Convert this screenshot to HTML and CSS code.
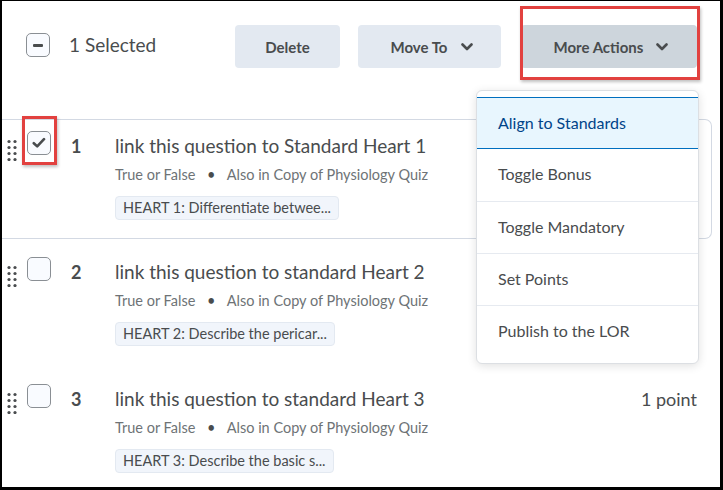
FILE: index.html
```html
<!DOCTYPE html>
<html lang="en">
<head>
  <meta charset="UTF-8">
  <title>Question list - More Actions</title>
  <link rel="stylesheet" href="styles.css">
</head>
<body>
  <div class="frame">
    <header class="toolbar">
      <div class="selection">
        <span class="checkbox partial"><span class="dash"></span></span>
        <span class="selected-count">1 Selected</span>
      </div>
      <div class="actions">
        <button class="btn">Delete</button>
        <button class="btn">Move To
          <svg class="chevron" width="12" height="8" viewBox="0 0 12 8"><path d="M1.5 1.5 L6 6 L10.5 1.5" /></svg>
        </button>
        <div class="menu-wrap">
          <button class="btn active">More Actions
            <svg class="chevron" width="12" height="8" viewBox="0 0 12 8"><path d="M1.5 1.5 L6 6 L10.5 1.5" /></svg>
          </button>
          <span class="callout callout-btn"></span>
          <ul class="dropdown">
            <li class="item focused">Align to Standards</li>
            <li class="item">Toggle Bonus</li>
            <li class="item">Toggle Mandatory</li>
            <li class="item">Set Points</li>
            <li class="item">Publish to the LOR</li>
          </ul>
        </div>
      </div>
    </header>

    <div class="questions">
      <div class="row selected">
        <svg class="handle" width="10" height="22" viewBox="0 0 10 22"><g fill="#494c4e"><circle cx="2" cy="2.5" r="1.6"/><circle cx="8" cy="2.5" r="1.6"/><circle cx="2" cy="8.5" r="1.6"/><circle cx="8" cy="8.5" r="1.6"/><circle cx="2" cy="14.5" r="1.6"/><circle cx="8" cy="14.5" r="1.6"/><circle cx="2" cy="20.5" r="1.6"/><circle cx="8" cy="20.5" r="1.6"/></g></svg>
        <div class="check-cell">
          <span class="checkbox checked">
            <svg width="14" height="12" viewBox="0 0 14 12"><path d="M1.8 6.2 L5.2 9.4 L12 2.2" fill="none" stroke="#494c4e" stroke-width="2.6" stroke-linecap="round" stroke-linejoin="round"/></svg>
          </span>
          <span class="callout callout-check"></span>
        </div>
        <div class="num">1</div>
        <div class="body">
          <div class="title">link this question to Standard Heart 1</div>
          <div class="meta">True or False <span class="dot">&bull;</span> Also in Copy of Physiology Quiz</div>
          <span class="tag">HEART 1: Differentiate betwee...</span>
        </div>
      </div>

      <div class="row">
        <svg class="handle" width="10" height="22" viewBox="0 0 10 22"><g fill="#494c4e"><circle cx="2" cy="2.5" r="1.6"/><circle cx="8" cy="2.5" r="1.6"/><circle cx="2" cy="8.5" r="1.6"/><circle cx="8" cy="8.5" r="1.6"/><circle cx="2" cy="14.5" r="1.6"/><circle cx="8" cy="14.5" r="1.6"/><circle cx="2" cy="20.5" r="1.6"/><circle cx="8" cy="20.5" r="1.6"/></g></svg>
        <div class="check-cell"><span class="checkbox"></span></div>
        <div class="num">2</div>
        <div class="body">
          <div class="title">link this question to standard Heart 2</div>
          <div class="meta">True or False <span class="dot">&bull;</span> Also in Copy of Physiology Quiz</div>
          <span class="tag">HEART 2: Describe the pericar...</span>
        </div>
      </div>

      <div class="row">
        <svg class="handle" width="10" height="22" viewBox="0 0 10 22"><g fill="#494c4e"><circle cx="2" cy="2.5" r="1.6"/><circle cx="8" cy="2.5" r="1.6"/><circle cx="2" cy="8.5" r="1.6"/><circle cx="8" cy="8.5" r="1.6"/><circle cx="2" cy="14.5" r="1.6"/><circle cx="8" cy="14.5" r="1.6"/><circle cx="2" cy="20.5" r="1.6"/><circle cx="8" cy="20.5" r="1.6"/></g></svg>
        <div class="check-cell"><span class="checkbox"></span></div>
        <div class="num">3</div>
        <div class="body">
          <div class="title">link this question to standard Heart 3</div>
          <div class="meta">True or False <span class="dot">&bull;</span> Also in Copy of Physiology Quiz</div>
          <span class="tag">HEART 3: Describe the basic s...</span>
        </div>
        <div class="points">1 point</div>
      </div>
    </div>
  </div>
</body>
</html>
```

FILE: styles.css
```css
* {
  margin: 0;
  padding: 0;
  box-sizing: border-box;
}

body {
  background-color: #000;
  font-family: 'Lato', 'Noto Sans', sans-serif;
  color: #494c4e;
  width: 723px;
  height: 490px;
  overflow: hidden;
}

.frame {
  margin: 1px 3px 3px 2px;
  height: 486px;
  background-color: #fff;
  overflow: hidden;
  position: relative;
}

/* toolbar */

.toolbar {
  height: 118px;
  display: flex;
  justify-content: space-between;
  align-items: flex-start;
  padding: 24px 23px 0 24px;
}

.selection {
  display: flex;
  align-items: center;
  margin-top: 8px;
  gap: 19px;
}

.selected-count {
  font-size: 19px;
  line-height: 24px;
}

.checkbox {
  width: 24px;
  height: 24px;
  border: 1px solid #8a8f94;
  border-radius: 5px;
  background-color: #f9fbff;
  display: flex;
  align-items: center;
  justify-content: center;
}

.checkbox .dash {
  width: 10px;
  height: 3px;
  border-radius: 1px;
  background-color: #494c4e;
}

.actions {
  display: flex;
  gap: 18px;
}

.btn {
  height: 43px;
  border: none;
  border-radius: 4px;
  background-color: #e3e9f1;
  color: #494c4e;
  font-family: 'Lato', 'Noto Sans', sans-serif;
  font-size: 15px;
  font-weight: bold;
  display: flex;
  align-items: center;
  justify-content: center;
  gap: 13px;
}

.actions > .btn:nth-child(1) {
  width: 105px;
}

.actions > .btn:nth-child(2) {
  width: 143px;
  padding-left: 4px;
}

.menu-wrap {
  position: relative;
  margin-left: 2px;
}

.menu-wrap .btn {
  width: 176px;
  padding-left: 4px;
}

.btn.active {
  background-color: #cdd5dc;
}

.chevron path {
  fill: none;
  stroke: #494c4e;
  stroke-width: 2.6;
  stroke-linecap: round;
  stroke-linejoin: round;
}

/* red annotation boxes */

.callout {
  position: absolute;
  border: 3px solid #e2413f;
  box-shadow: 1px 2px 3px rgba(0, 0, 0, 0.25);
  pointer-events: none;
}

.callout-btn {
  top: -19px;
  bottom: -12px;
  left: -1px;
  right: -3px;
}

.callout-check {
  top: -15px;
  bottom: -10px;
  left: -5px;
  right: -6px;
}

/* dropdown */

.dropdown {
  position: absolute;
  top: 65px;
  left: -45px;
  width: 223px;
  list-style: none;
  background-color: #fff;
  border: 1px solid #dcdfe3;
  border-radius: 6px;
  box-shadow: 0 2px 10px rgba(0, 0, 0, 0.12);
  padding: 6px 0;
  z-index: 5;
}

.item {
  height: 52px;
  line-height: 50px;
  padding-left: 21px;
  font-size: 16px;
  border-top: 1px solid #e6eaf0;
}

.item:first-child {
  border-top: none;
}

.item.focused {
  background-color: #e8f6fe;
  color: #004489;
  border-top: 1px solid #006fbf;
  border-bottom: 1px solid #006fbf;
}

.item.focused + .item {
  border-top: none;
}

/* question rows */

.row {
  display: flex;
  align-items: flex-start;
  height: 127px;
  padding: 21px 23px 0 5px;
}

.row.selected {
  height: 120px;
  padding-top: 14px;
  margin-right: 8px;
  padding-right: 15px;
  border: 1px solid #d3d9e3;
  border-left: none;
  border-radius: 0 7px 7px 0;
}

.handle {
  margin-top: 5px;
  flex-shrink: 0;
}

.check-cell {
  position: relative;
  margin-left: 10px;
  margin-top: -3px;
}

.num {
  width: 64px;
  padding-left: 20px;
  font-size: 18px;
  font-weight: bold;
  line-height: 24px;
}

.body {
  flex: 1;
}

.title {
  font-size: 19px;
  line-height: 24px;
}

.meta {
  margin-top: 7px;
  font-size: 14.5px;
  line-height: 20px;
  color: #6e7376;
}

.meta .dot {
  margin: 0 8px;
  color: #494c4e;
}

.tag {
  display: inline-block;
  margin-top: 11px;
  height: 24px;
  line-height: 22px;
  padding: 0 7px;
  font-size: 14.5px;
  background-color: #f1f5fb;
  border: 1px solid #e3e9f1;
  border-radius: 4px;
}

.points {
  font-size: 18px;
  line-height: 24px;
}
```
